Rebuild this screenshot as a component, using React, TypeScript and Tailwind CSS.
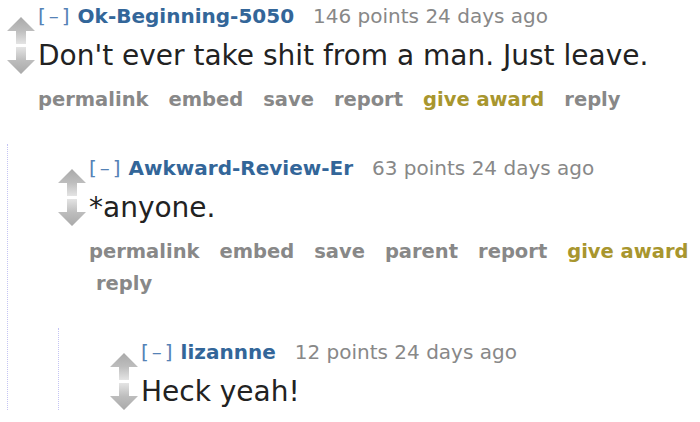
import type { ReactNode } from "react";

type Item = { label: string; gold?: boolean };

const baseActions: Item[] = [
  { label: "permalink" },
  { label: "embed" },
  { label: "save" },
];

function Arrow({ down = false }: { down?: boolean }) {
  const id = down ? "grad-down" : "grad-up";
  return (
    <svg width="28" height="27" viewBox="0 0 28 27" className="block">
      <defs>
        <linearGradient id={id} x1="0" y1={down ? "1" : "0"} x2="0" y2={down ? "0" : "1"}>
          <stop offset="0" stopColor="#a9a9a9" />
          <stop offset="0.5" stopColor="#bdbdbd" />
          <stop offset="1" stopColor="#e4e4e4" />
        </linearGradient>
      </defs>
      <polygon
        points={down ? "14,27 28,13 19,13 19,0 9,0 9,13 0,13" : "14,0 28,14 19,14 19,27 9,27 9,14 0,14"}
        fill={`url(#${id})`}
      />
    </svg>
  );
}

function Comment({
  author,
  points,
  body,
  actions,
  children,
}: {
  author: string;
  points: number;
  body: string;
  actions?: Item[];
  children?: ReactNode;
}) {
  return (
    <div>
      <div className="flex">
        <div className="mt-[13px] flex w-[28px] shrink-0 flex-col gap-[3px]">
          <Arrow />
          <Arrow down />
        </div>
        <div className="ml-[3px] min-w-0 flex-1">
          <div className="text-[20px] leading-[24px] whitespace-nowrap">
            <span className="tracking-[3px] text-[#5582b6]">[–]</span>
            <span className="ml-[5px] font-bold text-[#336699]">{author}</span>
            <span className="ml-[19px] text-[#888888]">{points} points 24 days ago</span>
          </div>
          <div className="mt-[12px] text-[28px] leading-[32px] text-[#222222]">{body}</div>
          {actions ? (
            <ul className="mt-[12px] flex flex-wrap gap-x-[13px] text-[19.5px] leading-[32px] font-bold">
              {actions.map((item, i) => (
                <li
                  key={item.label}
                  className={`${i === 0 ? "" : "pl-[7px]"} ${item.gold ? "text-[#a8962e]" : "text-[#888888]"}`}
                >
                  {item.label}
                </li>
              ))}
            </ul>
          ) : null}
        </div>
      </div>
      {children ? (
        <div className="mt-[28px] border-l border-dotted border-[#c4c4f4] pt-[12px]">{children}</div>
      ) : null}
    </div>
  );
}

export default function App() {
  return (
    <div
      className="h-[422px] w-[700px] overflow-hidden bg-white pt-[4px] pl-[7px]"
      style={{ fontFamily: '"DejaVu Sans", Verdana, sans-serif' }}
    >
      <Comment
        author="Ok-Beginning-5050"
        points={146}
        body="Don't ever take shit from a man. Just leave."
        actions={[...baseActions, { label: "report" }, { label: "give award", gold: true }, { label: "reply" }]}
      >
        <div className="pl-[50px]">
          <Comment
            author="Awkward-Review-Er"
            points={63}
            body="*anyone."
            actions={[
              ...baseActions,
              { label: "parent" },
              { label: "report" },
              { label: "give award", gold: true },
              { label: "reply" },
            ]}
          >
            <div className="pl-[51px]">
              <Comment author="lizannne" points={12} body="Heck yeah!" />
            </div>
          </Comment>
        </div>
      </Comment>
    </div>
  );
}
